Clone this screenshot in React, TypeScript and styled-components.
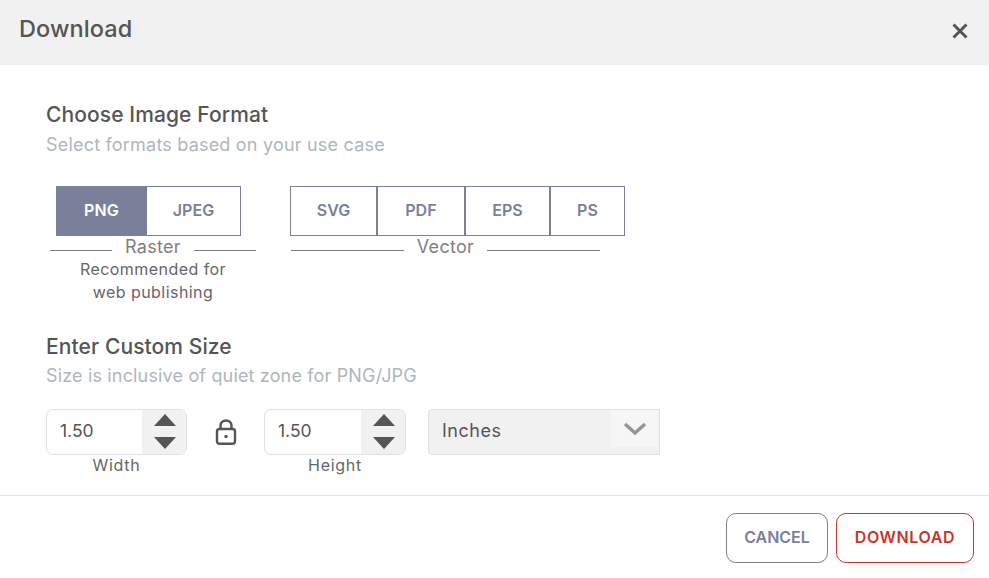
import React from "react";
import styled, { createGlobalStyle } from "styled-components";

const Global = createGlobalStyle`
  html, body { margin: 0; padding: 0; background: #fff; }
  body { font-family: "Inter", "Open Sans", sans-serif; color: #555; width: 989px; height: 578px; overflow: hidden; }
`;
const Header = styled.header`
  height: 65px; background: #f1f1f1; display: flex; align-items: center; justify-content: space-between;
  padding: 0 20px; box-sizing: border-box;
`;
const Title = styled.h1`
  margin: -7px 0 0 -1px; font-size: 23.5px; line-height: 28px; font-weight: 500; letter-spacing: 0.1px; color: #555;
`;
const Close = styled.button`
  border: 0; background: none; padding: 0; width: 18px; height: 18px; display: flex; margin: 0 0 3px 0; color: #555;
`;
const Body = styled.main`
  height: 431px; box-sizing: border-box; padding: 38px 0 0 46px; border-bottom: 1px solid #e2e2e2;
`;
const Heading = styled.h2`
  margin: 0; font-size: 21px; line-height: 24px; font-weight: 500; letter-spacing: 0.1px; color: #555;
`;
const Sub = styled.p`
  margin: 7px 0 0; font-size: 18px; line-height: 22px; font-weight: 400; letter-spacing: 0.2px; color: #aeb6bf;
`;
const FormatRow = styled.div`
  display: flex; gap: 34px; padding-left: 4px; margin-top: 30px; height: 137px;
`;
const Group = styled.div<{ $width: number }>`
  width: ${(p) => p.$width}px; display: flex; flex-direction: column;
`;
const Buttons = styled.div<{ $inset: number }>`
  display: flex; height: 50px; margin-left: ${(p) => p.$inset}px;
`;
const Format = styled.div<{ $width: number; $active?: boolean }>`
  width: ${(p) => p.$width}px; box-sizing: border-box; display: flex; align-items: center; justify-content: center;
  border: 1px solid #7a7f9a; padding-bottom: 2px; font-size: 16px; font-weight: 600; letter-spacing: 0.1px;
  background: ${(p) => (p.$active ? "#7a7f9a" : "#fff")};
  color: ${(p) => (p.$active ? "#fff" : "#7a7f9a")};
`;
const RasterNext = styled(Format)`
  border-left: 0;
`;
const Rule = styled.div<{ $width: number; $offset: number }>`
  width: ${(p) => p.$width}px; margin-left: ${(p) => p.$offset}px; display: flex; align-items: center; height: 22px; gap: 13px;
`;
const RuleLine = styled.span`
  flex: 1; height: 1px; background: #808080; margin-top: 6px;
`;
const RuleLabel = styled.span`
  font-size: 18px; line-height: 22px; color: #808080; letter-spacing: 0.3px;
`;
const Note = styled.div`
  width: 206px; text-align: center; font-size: 16px; line-height: 23px; letter-spacing: 0.45px; color: #666;
`;
const SizeHeading = styled(Heading)`
  margin-top: 12px;
`;
const SizeSub = styled(Sub)`
  margin-top: 6px; letter-spacing: 0.16px;
`;
const SizeRow = styled.div`
  display: flex; margin-top: 22px; align-items: flex-start;
`;
const Field = styled.div<{ $width: number }>`
  width: ${(p) => p.$width}px; display: flex; flex-direction: column; align-items: center;
`;
const Stepper = styled.div`
  width: 100%; height: 46px; box-sizing: border-box; border: 1px solid #dfe1e5; border-radius: 7px; display: flex; overflow: hidden;
`;
const Value = styled.div`
  flex: 1; padding-left: 13px; font-size: 17.5px; line-height: 42px; color: #555;
`;
const Arrows = styled.div`
  width: 44px; background: #f1f1f1; display: flex; flex-direction: column; align-items: center; gap: 11px; padding: 4px 0 0 1px; box-sizing: border-box;
`;
const Arrow = styled.svg`
  display: block; width: 22px; height: 12px; fill: #555;
`;
const FieldLabel = styled.div`
  font-size: 16px; line-height: 20px; letter-spacing: 0.7px; color: #666;
`;
const LockSlot = styled.div`
  width: 77px; height: 46px; display: flex; align-items: center; justify-content: center; color: #555;
`;
const Select = styled.div`
  width: 232px; height: 46px; box-sizing: border-box; margin-left: 22px; border: 1px solid #e0e0e6; border-radius: 4px 0 0 4px;
  background: #f1f1f1; display: flex; justify-content: space-between;
`;
const SelectValue = styled.div`
  padding-left: 13px; font-size: 18px; line-height: 42px; letter-spacing: 0.5px; color: #555;
`;
const Chevron = styled.div`
  width: 47px; height: 37px; margin-right: 1px; background: #f6f6f6; display: flex; align-items: center; justify-content: center;
`;
const Footer = styled.footer`
  display: flex; justify-content: flex-end; gap: 8px; padding: 17px 15px 0 0;
`;
const Action = styled.button<{ $width: number; $color: string; $spacing: number }>`
  width: ${(p) => p.$width}px; height: 50px; background: #fff; border: 1px solid ${(p) => p.$color}; border-radius: 10px;
  color: ${(p) => p.$color}; font: 600 16px "Inter", sans-serif; letter-spacing: ${(p) => p.$spacing}px; padding: 0 0 2px;
`;

const SpinArrows = () => (
  <Arrows>
    <Arrow viewBox="0 0 22 12"><path d="M11 0 22 12H0Z" /></Arrow>
    <Arrow viewBox="0 0 22 12"><path d="M0 0H22L11 12Z" /></Arrow>
  </Arrows>
);

export default function App() {
  return (
    <>
      <Global />
      <Header>
        <Title>Download</Title>
        <Close aria-label="Close">
          <svg width="18" height="18" viewBox="0 0 18 18" fill="none" stroke="currentColor" strokeWidth="3">
            <path d="M2.5 2.5 15.5 15.5M15.5 2.5 2.5 15.5" />
          </svg>
        </Close>
      </Header>
      <Body>
        <Heading>Choose Image Format</Heading>
        <Sub>Select formats based on your use case</Sub>
        <FormatRow>
          <Group $width={206}>
            <Buttons $inset={6}>
              <Format $width={91} $active>PNG</Format>
              <RasterNext $width={94}>JPEG</RasterNext>
            </Buttons>
            <Rule $width={206} $offset={0}>
              <RuleLine /><RuleLabel>Raster</RuleLabel><RuleLine />
            </Rule>
            <Note>Recommended for<br />web publishing</Note>
          </Group>
          <Group $width={335}>
            <Buttons $inset={0}>
              <Format $width={87}>SVG</Format>
              <Format $width={88}>PDF</Format>
              <Format $width={85}>EPS</Format>
              <Format $width={75}>PS</Format>
            </Buttons>
            <Rule $width={309} $offset={1}>
              <RuleLine /><RuleLabel>Vector</RuleLabel><RuleLine />
            </Rule>
          </Group>
        </FormatRow>
        <SizeHeading>Enter Custom Size</SizeHeading>
        <SizeSub>Size is inclusive of quiet zone for PNG/JPG</SizeSub>
        <SizeRow>
          <Field $width={141}>
            <Stepper>
              <Value>1.50</Value>
              <SpinArrows />
            </Stepper>
            <FieldLabel>Width</FieldLabel>
          </Field>
          <LockSlot>
            <svg width="22" height="26" viewBox="0 0 22 26" fill="none" stroke="currentColor" strokeWidth="2.4">
              <rect x="2" y="10" width="18" height="14.8" rx="2.5" />
              <path d="M5.5 10V6.5a5.5 5 0 0 1 11 0V10" />
              <circle cx="11" cy="17.5" r="1.7" fill="currentColor" stroke="none" />
            </svg>
          </LockSlot>
          <Field $width={142}>
            <Stepper>
              <Value>1.50</Value>
              <SpinArrows />
            </Stepper>
            <FieldLabel>Height</FieldLabel>
          </Field>
          <Select>
            <SelectValue>Inches</SelectValue>
            <Chevron>
              <svg width="24" height="14" viewBox="0 0 24 14" fill="none" stroke="#9a9393" strokeWidth="3.4">
                <path d="M2 2 12 11 22 2" />
              </svg>
            </Chevron>
          </Select>
        </SizeRow>
      </Body>
      <Footer>
        <Action $width={102} $color="#7a7f9a" $spacing={0}>CANCEL</Action>
        <Action $width={138} $color="#c8352a" $spacing={0.6}>DOWNLOAD</Action>
      </Footer>
    </>
  );
}
